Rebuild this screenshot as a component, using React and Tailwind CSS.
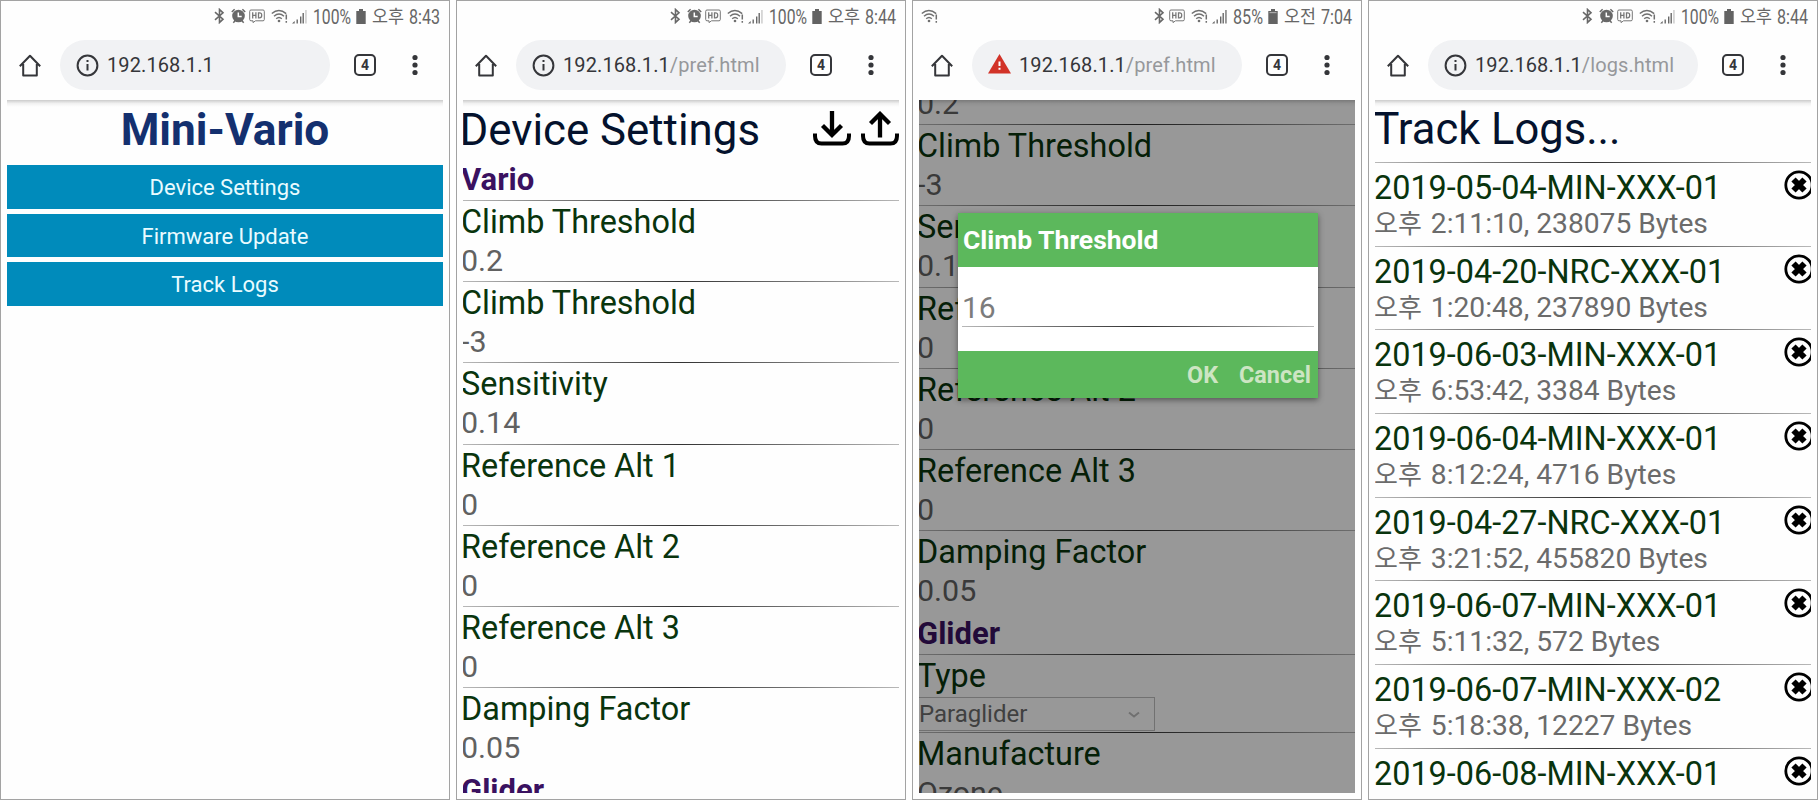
import React from "react";

const FONT = "font-[Roboto,'Noto_Sans_CJK_KR',sans-serif]";

function Fit({ w, size, className, children }) {
  return (
    <svg width={w} height={size * 1.4} className={"shrink-0 overflow-visible " + className}>
      <text x="0" y={size * 1.09} fontSize={size} textLength={w} lengthAdjust="spacingAndGlyphs" fill="currentColor">
        {children}
      </text>
    </svg>
  );
}

function Bluetooth() {
  return (
    <svg className="shrink-0" width="11" height="16" viewBox="0 0 11 16" fill="none" stroke="#686868" strokeWidth="1.6">
      <path d="M1 4.2 9 11.2 5.5 14.5V1.5L9 4.8 1 11.8" />
    </svg>
  );
}

function Alarm() {
  return (
    <svg className="shrink-0" width="15" height="16" viewBox="0 0 15 16">
      <circle cx="7.5" cy="8" r="6.3" fill="#686868" />
      <path d="M.8 4 3.6 1.2M14.2 4 11.4 1.2M2.3 14.8l1.8-2M12.7 14.8l-1.8-2" stroke="#686868" strokeWidth="1.5" />
      <path d="M7.3 4.5v4h3.4" stroke="#fff" strokeWidth="1.5" fill="none" />
    </svg>
  );
}

function Hd() {
  return (
    <svg className="shrink-0" width="16" height="14" viewBox="0 0 16 14" fill="none" stroke="#777">
      <path d="M2 1h12q1.3 0 1.3 1.3v8.2Q15.3 11.8 14 11.8H6.5L4 13.6V11.8H2Q.7 11.8 .7 10.5V2.3Q.7 1 2 1Z" strokeWidth="1" />
      <path d="M3.7 3.2v6.300M6.9 3.2v6.300M3.7 6.300h3.200M9.5 3.800v5.100h1q2.200 0 2.200-2.550t-2.200-2.550z" strokeWidth="1.300" />
    </svg>
  );
}

function Wifi() {
  return (
    <svg className="shrink-0" width="17" height="15" viewBox="0 0 17 15" fill="none" stroke="#707070" strokeWidth="1.4">
      <path d="M.8 4.6q7-6.400 14.400 0M3 7.200q5-4.500 10 0M5.200 9.800q2.800-2.600 5.600 0" />
      <circle cx="8" cy="12" r="1.300" fill="#707070" stroke="none" />
      <path d="M15.300 5.500v5M15.300 12v1.800" strokeWidth="1.500" />
    </svg>
  );
}

function Signal({ full }) {
  return (
    <svg className="shrink-0" width="15" height="15" viewBox="0 0 15 15" fill="#686868">
      <path d="M0 14.500 2.700 12v2.500zM4.500 10.500h1.400v4H4.500zM8 7.500h1.400v7H8zM10.500 4h1.400v10.500h-1.400z" />
      <path d="M13.300 1h1.300v13.500h-1.300z" fill={full ? "#686868" : "#c4c4c4"} />
    </svg>
  );
}

function Battery({ partial }) {
  return (
    <svg className="shrink-0" width="10" height="15" viewBox="0 0 10 15">
      <path d="M3 0h4v2h2.700v13H.3V2H3z" fill="#636363" />
      {partial && <path d="M1.500 3h7v1.200h-7z" fill="#aaa" />}
    </svg>
  );
}

function StatusBar({ pct, pctWidth, ampm, time, morning }) {
  return (
    <div className="flex h-[18px] items-center justify-between text-[#666]">
      <div className="pl-[2px]">{morning && <Wifi />}</div>
      <div className="flex items-center pr-[3px]">
        <Bluetooth />
        {!morning && <div className="ml-[6px]"><Alarm /></div>}
        <div className={morning ? "ml-[4px]" : "ml-[3px]"}><Hd /></div>
        <div className="ml-[6px]"><Wifi /></div>
        <div className="ml-[4px]"><Signal full={morning} /></div>
        <Fit w={pctWidth} size={20} className="ml-[6px]">{pct}</Fit>
        <div className="ml-[5px]"><Battery partial={morning} /></div>
        <Fit w={32} size={18} className="ml-[6px]">{ampm}</Fit>
        <Fit w={31} size={20} className="ml-[5px]">{time}</Fit>
      </div>
    </div>
  );
}

function AddressBar({ path, warn }) {
  return (
    <div className="flex h-[75px] shrink-0 items-center pl-[12px] pt-[5px] text-[#35363a]">
      <svg className="shrink-0" width="22" height="23" viewBox="0 0 22 23" fill="none" stroke="#35363a" strokeWidth="2" strokeLinejoin="round">
        <path d="M.8 12.300 11 1.700 21.200 12.300M4.200 10v11.500h13.600V10" />
      </svg>
      <div className="ml-[19px] flex h-[50px] w-[270px] shrink-0 items-center rounded-full bg-[#f1f2f4] pl-[16px]">
        {warn ? (
          <svg className="-mt-[2px] shrink-0" width="23" height="22" viewBox="0 0 23 22">
            <path d="M11.500 1 23 20.500H0z" fill="#d23328" />
            <path d="M10.500 8.500h2v4.500h-2zM10.500 14.700h2v2h-2z" fill="#fff" />
          </svg>
        ) : (
          <svg className="shrink-0" width="23" height="23" viewBox="0 0 23 23">
            <circle cx="11.500" cy="11.500" r="9.900" fill="none" stroke="#35363a" strokeWidth="2" />
            <path d="M10.500 6h2v2h-2zM10.500 10h2v6.500h-2z" fill="#35363a" />
          </svg>
        )}
        <div className="ml-[8px] whitespace-nowrap text-[20px] leading-[24px] tracking-[0.1px]">
          192.168.1.1<span className="text-[#96989b]">{path}</span>
        </div>
      </div>
      <div className="ml-[24px] flex h-[22px] w-[22px] shrink-0 items-center justify-center rounded-[5px] border-2 border-[#35363a] text-[14px] font-bold leading-none">
        4
      </div>
      <svg className="ml-[36px] shrink-0" width="6" height="22" viewBox="0 0 6 22" fill="#35363a">
        <circle cx="3" cy="3.500" r="2.600" />
        <circle cx="3" cy="11" r="2.600" />
        <circle cx="3" cy="18.500" r="2.600" />
      </svg>
    </div>
  );
}

function Phone({ status, path, warn, children }) {
  return (
    <section className="flex h-[800px] w-[450px] shrink-0 flex-col border border-[#a3a3a3] bg-[#fefefe] p-[6px]">
      <StatusBar {...status} />
      <AddressBar path={path} warn={warn} />
      <div className="relative min-h-0 flex-1 overflow-hidden">
        {children}
        <div className="absolute inset-x-0 top-0 h-[7px] bg-linear-to-b from-black/20 via-black/5 to-transparent" />
      </div>
    </section>
  );
}

function Rule() {
  return <div className="h-px shrink-0 bg-linear-to-r from-[#b8b8b8] via-[#333] to-[#b8b8b8]" />;
}

function Group({ children }) {
  return (
    <div className="-ml-[2px] h-[42.6px] pt-[2.5px] text-[31px] font-bold leading-[40px] text-[#3a1160]">{children}</div>
  );
}

function Label({ children }) {
  return <div className="-ml-[2px] h-[40px] text-[32.4px] leading-[42px] text-[#09340d]">{children}</div>;
}

function Setting({ name, value }) {
  return (
    <>
      <Rule />
      <div className="h-[80.2px]">
        <Label>{name}</Label>
        <div className="-ml-[2px] h-[40px] text-[30.4px] leading-[40px] text-[#616161]">{value}</div>
      </div>
    </>
  );
}

const okStatus = { pct: "100%", pctWidth: 38, ampm: "오후", time: "8:44" };

const settings = [
  ["Climb Threshold", "0.2"],
  ["Climb Threshold", "-3"],
  ["Sensitivity", "0.14"],
  ["Reference Alt 1", "0"],
  ["Reference Alt 2", "0"],
  ["Reference Alt 3", "0"],
  ["Damping Factor", "0.05"],
];

const logs = [
  ["2019-05-04-MIN-XXX-01", "2:11:10, 238075 Bytes"],
  ["2019-04-20-NRC-XXX-01", "1:20:48, 237890 Bytes"],
  ["2019-06-03-MIN-XXX-01", "6:53:42, 3384 Bytes"],
  ["2019-06-04-MIN-XXX-01", "8:12:24, 4716 Bytes"],
  ["2019-04-27-NRC-XXX-01", "3:21:52, 455820 Bytes"],
  ["2019-06-07-MIN-XXX-01", "5:11:32, 572 Bytes"],
  ["2019-06-07-MIN-XXX-02", "5:18:38, 12227 Bytes"],
  ["2019-06-08-MIN-XXX-01", ""],
];

function SettingsList() {
  return settings.map(([n, v], i) => <Setting key={i} name={n} value={v} />);
}

function Tray({ up }) {
  return (
    <svg className="shrink-0" width="38" height="36" viewBox="0 0 38 36" fill="none" stroke="#000">
      <path d="M2 22.500v2.500q0 7.500 6.500 7.500h21q6.500 0 6.500-7.500v-2.500" strokeWidth="4" />
      {up ? (
        <path d="M19 26.500V3M9.500 12.500 19 3l9.500 9.500" strokeWidth="4.300" />
      ) : (
        <path d="M19 0v23M9.500 14.500 19 24l9.500-9.500" strokeWidth="4.300" />
      )}
    </svg>
  );
}

function HomePage() {
  return (
    <div>
      <h1 className="h-[65px] pt-[4px] text-center text-[44.2px] font-bold leading-[52px] text-[#14306f]">Mini-Vario</h1>
      <div className="flex flex-col gap-[5px]">
        {["Device Settings", "Firmware Update", "Track Logs"].map((t) => (
          <button key={t} className="block h-[43.5px] w-full bg-[#008bbb] text-[22px] leading-[45px] text-[#e9fbff]">{t}</button>
        ))}
      </div>
    </div>
  );
}

function PrefPage() {
  return (
    <div>
      <div className="flex h-[57.4px] justify-between">
        <h1 className="-ml-[3.5px] pt-[4px] text-[43.8px] leading-[52px] text-[#04122d]">Device Settings</h1>
        <div className="flex gap-[10px] pt-[11px]">
          <Tray />
          <Tray up />
        </div>
      </div>
      <Group>Vario</Group>
      <SettingsList />
      <Group>Glider</Group>
    </div>
  );
}

function DialogPage() {
  return (
    <div className="h-full">
      <div className="-mt-[57px]">
        <SettingsList />
        <Group>Glider</Group>
        <Rule />
        <Label>Type</Label>
        <div className="mt-[2px] flex h-[34px] w-[236px] items-center justify-between border border-l-0 border-[#bdbdbd] pt-[1px] pr-[14px] text-[24px] text-[#6b6b6b]">
          Paraglider
          <svg width="12" height="7" viewBox="0 0 12 7" fill="none" stroke="#bbb" strokeWidth="2">
            <path d="M1 1.500 6 5.500 11 1.500" />
          </svg>
        </div>
        <div className="h-[1px]" />
        <Setting name="Manufacture" value="Ozone" />
      </div>
      <div className="absolute inset-0 bg-black/40" />
      <div className="absolute left-[39px] top-[113px] flex h-[185px] w-[360px] flex-col bg-white shadow-[0_2px_6px_rgba(0,0,0,0.45)]">
        <div className="h-[54px] bg-[#5cb85c] pl-[5px] text-[26.5px] font-bold leading-[54px] text-white">Climb Threshold</div>
        <div className="flex-1 px-[4px] pt-[19px]">
          <div className="h-[40px] text-[30px] leading-[43px] text-[#7c7c7c]">16</div>
          <Rule />
        </div>
        <div className="flex h-[47px] justify-end gap-[21px] bg-[#5cb85c] pr-[7px] text-[23.4px] font-bold leading-[48px] text-[#cde5c3]">
          <span>OK</span>
          <span>Cancel</span>
        </div>
      </div>
    </div>
  );
}

function LogsPage() {
  return (
    <div>
      <h1 className="-ml-[1.5px] h-[62px] pt-[4px] text-[43.5px] leading-[52px] text-[#04122d]">Track Logs...</h1>
      {logs.map(([name, info]) => (
        <div key={name}>
          <Rule />
          <div className="flex h-[82.7px] justify-between">
            <div className="-ml-px whitespace-nowrap pt-[4px]">
              <div className="h-[40px] text-[32.4px] leading-[42px] text-[#09340d]">{name}</div>
              {info && (
                <div className="flex h-[34px] items-baseline gap-[9px] text-[28.2px] leading-[33px] text-[#6b6b6b]">
                  <span className="text-[26px]">오후</span>
                  <span>{info}</span>
                </div>
              )}
            </div>
            <svg className="mt-[7px] shrink-0" width="27" height="30" viewBox="0 0 27 30" fill="none" stroke="#000">
              <circle cx="15" cy="15" r="13.200" strokeWidth="2.800" />
              <path d="m9.500 9.500 11 11M20.500 9.500l-11 11" strokeWidth="6" />
            </svg>
          </div>
        </div>
      ))}
    </div>
  );
}

export default function App() {
  return (
    <main className={"flex h-[800px] w-[1818px] gap-[6px] overflow-hidden bg-white " + FONT}>
      <Phone status={{ ...okStatus, time: "8:43" }}><HomePage /></Phone>
      <Phone status={okStatus} path="/pref.html"><PrefPage /></Phone>
      <Phone status={{ pct: "85%", pctWidth: 30, ampm: "오전", time: "7:04", morning: true }} path="/pref.html" warn><DialogPage /></Phone>
      <Phone status={okStatus} path="/logs.html"><LogsPage /></Phone>
    </main>
  );
}
